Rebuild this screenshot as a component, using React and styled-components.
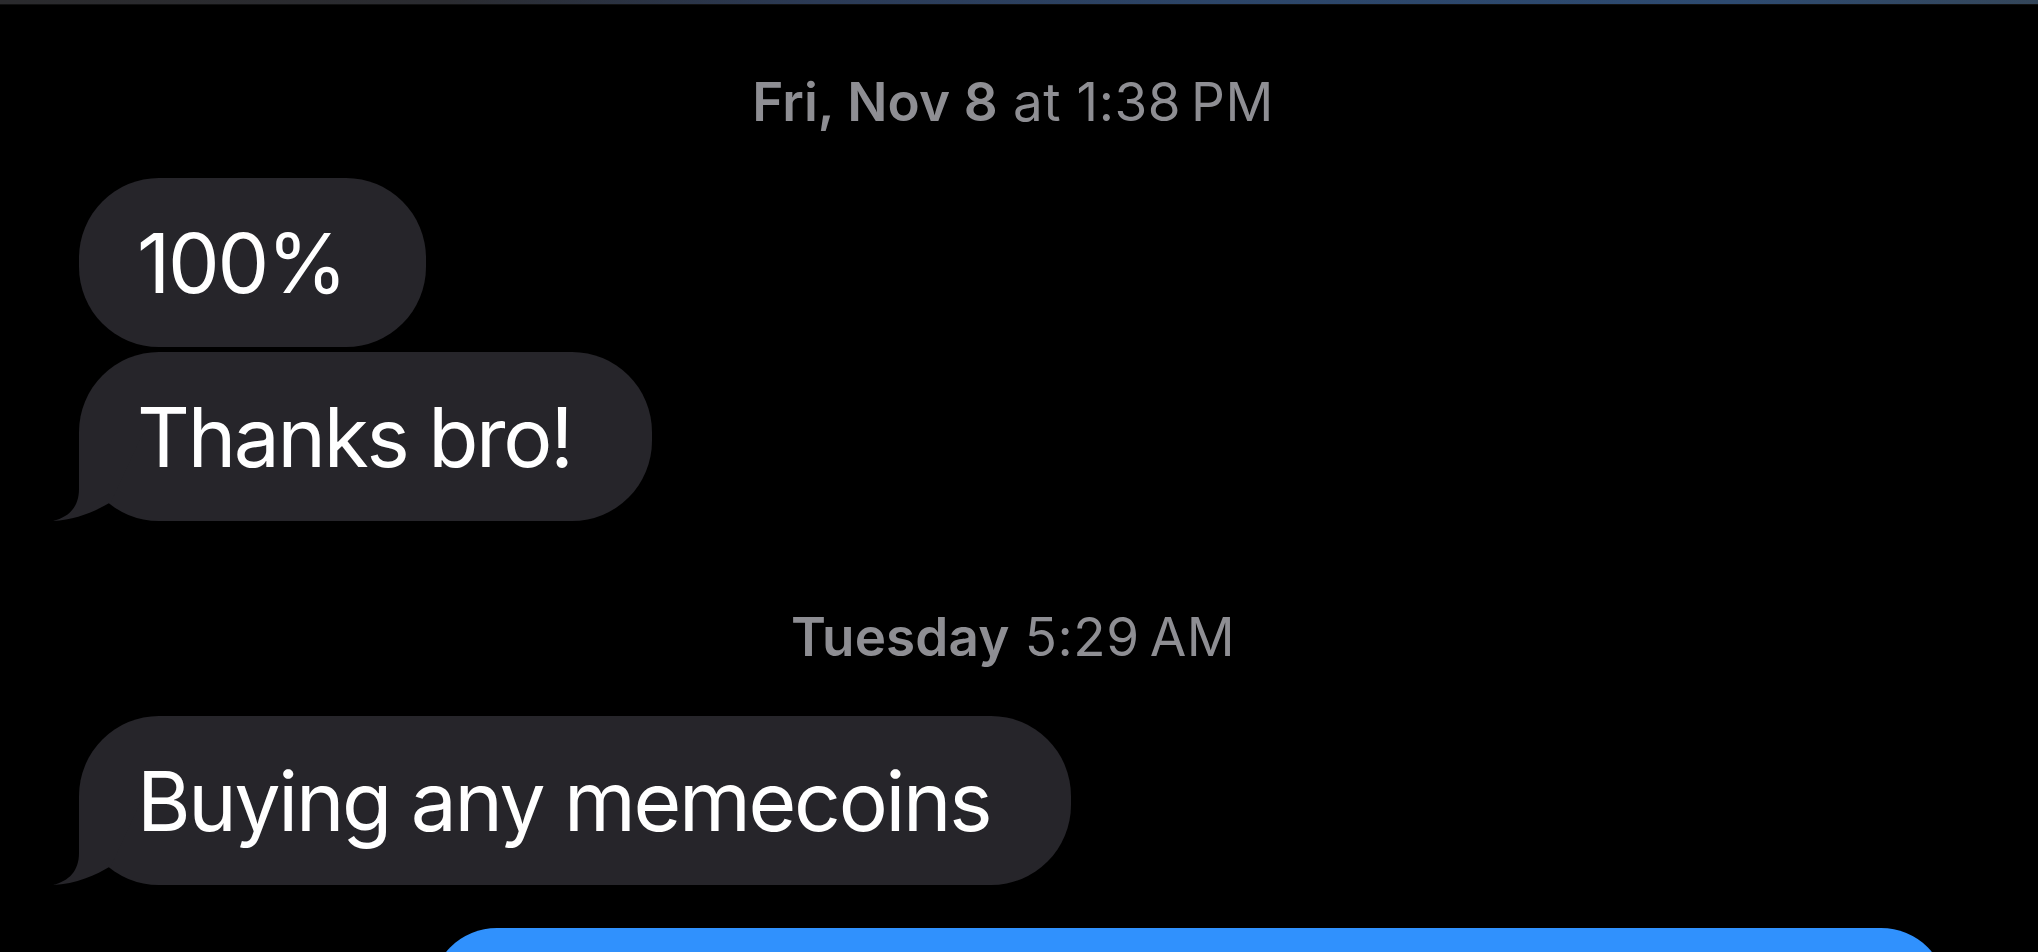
import React from "react";
import styled, { createGlobalStyle } from "styled-components";

const Global = createGlobalStyle`
  html, body {
    margin: 0;
    padding: 0;
    background: #000;
  }
  body {
    font-family: Inter, "Liberation Sans", Arial, sans-serif;
    -webkit-font-smoothing: antialiased;
  }
`;

const Screen = styled.div`
  width: 100%;
  height: 100vh;
  background: #000;
  overflow: hidden;
  display: flex;
  flex-direction: column;
`;

const TopBar = styled.div`
  flex: none;
  height: 4px;
  background: linear-gradient(
    90deg,
    #2a2a2d 0%,
    #2a2b30 22%,
    #2b3a55 40%,
    #2c4568 60%,
    #2d4a70 85%,
    #34465a 100%
  );
  box-shadow: 0 1px 0 #101010;
`;

const Thread = styled.div`
  display: flex;
  flex-direction: column;
  padding: 0 91px 0 79px;
`;

const Timestamp = styled.div`
  margin-top: ${(p) => p.$top}px;
  text-align: center;
  font-size: 53px;
  line-height: 64px;
  color: #8e8e93;
  font-weight: 400;
  letter-spacing: 0.5px;
  white-space: nowrap;

  strong {
    font-weight: 600;
    letter-spacing: 0.1px;
  }
`;

const Group = styled.div`
  margin-top: ${(p) => p.$top}px;
  display: flex;
  flex-direction: column;
  align-items: flex-start;
  gap: 5px;
`;

const Bubble = styled.div`
  position: relative;
  box-sizing: border-box;
  height: 169px;
  padding: 36px 81px 33px 58px;
  border-radius: 80px;
  background: #26252a;
  color: #fff;
  font-size: 82px;
  line-height: 100px;
  font-weight: 400;
  letter-spacing: -2.3px;
  white-space: nowrap;
`;

const Tail = styled.svg`
  position: absolute;
  left: -28px;
  bottom: 0;
  width: 100px;
  height: 92px;
  display: block;
`;

const SentBubble = styled.div`
  margin-top: ${(p) => p.$top}px;
  align-self: flex-end;
  box-sizing: border-box;
  width: 1516px;
  height: 260px;
  border-radius: 66px;
  background: #3091fd;
`;

function ReceivedBubble({ tail, children }) {
  return (
    <Bubble>
      {children}
      {tail && (
        <Tail viewBox="0 0 100 92" aria-hidden="true">
          <path
            d="M28 4 L28 60 C28 78 18 88 2 92 C25 91 45 82 60 73 L92 4 Z"
            fill="#26252a"
          />
        </Tail>
      )}
    </Bubble>
  );
}

export default function App() {
  return (
    <>
      <Global />
      <Screen>
        <TopBar />
        <Thread>
          <Timestamp $top={66}>
            <strong>Fri, Nov 8</strong> at 1:38&#8201;PM
          </Timestamp>
          <Group $top={44}>
            <ReceivedBubble>100%</ReceivedBubble>
            <ReceivedBubble tail>Thanks bro!</ReceivedBubble>
          </Group>
          <Timestamp $top={84}>
            <strong>Tuesday</strong> 5:29&#8201;AM
          </Timestamp>
          <Group $top={47}>
            <ReceivedBubble tail>Buying any memecoins</ReceivedBubble>
          </Group>
          <SentBubble $top={43} />
        </Thread>
      </Screen>
    </>
  );
}
